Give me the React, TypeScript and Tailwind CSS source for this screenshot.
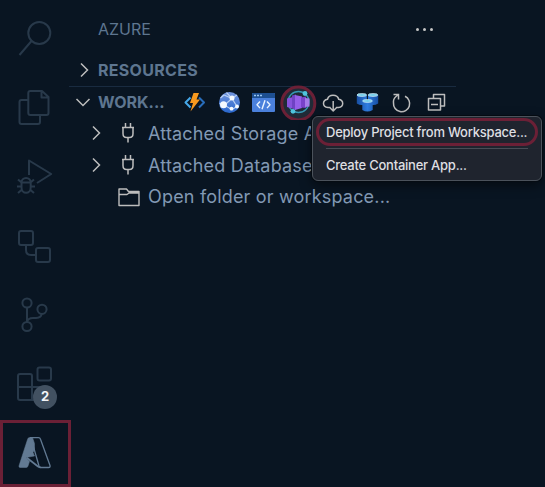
import React from 'react';

type GlyphProps = { box: string; className: string; children: React.ReactNode };

function Glyph({ box, className, children }: GlyphProps) {
  return (
    <svg viewBox={box} className={`block shrink-0 ${className}`} fill="none" stroke="currentColor" strokeLinejoin="round">
      {children}
    </svg>
  );
}

function ActivityBar() {
  const slot = 'w-[71px] h-[69px] text-[#28394a] stroke-2';
  return (
    <nav className="flex h-[487px] w-[71px] shrink-0 flex-col pt-1">
      <Glyph box="0 4 71 69" className={slot}>
        <circle cx="39.3" cy="33" r="11" />
        <path d="M31.5 41 19.5 55" />
      </Glyph>
      <Glyph box="0 73 71 69" className={slot}>
        <path d="M28 100h-6.5q-2 0-2 2v20q0 2 2 2H38q2 0 2-2v-6" />
        <path d="M30.300 91H42l6.500 6v16q0 2-2 2H30.300q-2 0-2-2V93q0-2 2-2zM41.500 91v6.500h7" />
      </Glyph>
      <Glyph box="0 142 71 69" className={slot}>
        <path d="M29 175V160.500L51.200 174 37 183" />
        <path d="M21.500 182.500v5a4.600 5.300 0 0 0 9.200 0v-5zM21.500 182.500a4.600 4.500 0 0 1 9.200 0M17 186.500h4M31 186.500h4M18 179.500l3.500 3M34 179.500l-3.500 3M18 193l3.500-3M34 193l-3.500-3" />
      </Glyph>
      <Glyph box="0 211 71 69" className={slot}>
        <rect x="19" y="231" width="14" height="14" rx="2" />
        <rect x="36" y="248" width="14" height="14" rx="2" />
        <path d="M26 245v5q0 5 5 5h5" />
      </Glyph>
      <Glyph box="0 280 71 69" className={slot}>
        <circle cx="27" cy="303" r="4.600" />
        <circle cx="42" cy="309.300" r="4.600" />
        <circle cx="27" cy="326.500" r="4.600" />
        <path d="M27 308v14q1-4 6-4h3q5.500-.500 5.500-4" />
      </Glyph>
      <div className="relative">
        <Glyph box="0 349 71 69" className={slot}>
          <rect x="37.500" y="367.500" width="13.500" height="13" rx="2" />
          <path d="M20 374h10q2 0 2 2v24H20q-2 0-2-2v-22q0-2 2-2zM18 387h27M32 400h13V387" />
        </Glyph>
        <span className="absolute left-[33px] top-[36px] flex h-6 w-6 items-center justify-center rounded-full bg-[#425161] font-[Inter,sans-serif] text-[13px] font-bold text-[#f3f5f7]">2</span>
      </div>
      <div className="mt-0.5 h-[67px] w-[71px] border-[3px] border-[#6b2036]">
        <Glyph box="3 423 65 61" className="h-[61px] w-[65px] text-[#627a93]">
          <path d="M29.500 437.500h3l2 6v6l-1.500 3 1.500 3.500-8.500 1.500 3.500 4-1.500 4.500q-.500 1.500-2 1.500h-6q-1.500 0-1-1.700l8.500-26.300q.500-2 2-2z" fill="currentColor" strokeWidth=".500" />
          <path d="M30 437.700h8.500q1.500 0 2 1.500l9.500 26.300q.500 2-1.500 2H41q-1.500 0-2-1.500L31.500 440q-.500-1.500-1.500-2.300" strokeWidth="1.300" />
          <path d="M26.500 457.500 38 466.500q1 1 3 1" strokeWidth="1.700" />
        </Glyph>
      </div>
    </nav>
  );
}

const Chevron = ({ down = false }: { down?: boolean }) => (
  <Glyph box="0 0 16 16" className="h-4 w-4 text-[#bdbdbd] stroke-[1.5]">
    <path d={down ? 'M1.500 5 8 11.500 14.500 5' : 'M5 1.500 11.500 8 5 14.500'} strokeLinejoin="miter" />
  </Glyph>
);

function Toolbar() {
  return (
    <Glyph box="180 84 270 36" className="h-9 w-[270px] text-[#bdbdbd]">
      <defs>
        <linearGradient id="web" x1="0" y1="0" x2="0" y2="1"><stop stopColor="#7295de" /><stop offset="1" stopColor="#2866cc" /></linearGradient>
        <linearGradient id="server" x1="0" x2="1"><stop stopColor="#174ea2" /><stop offset=".5" stopColor="#2f7de0" /><stop offset="1" stopColor="#174ea2" /></linearGradient>
      </defs>
      <g strokeWidth="2">
        <path d="m190.500 97.500-5 5 5 5" stroke="#45a7e8" />
        <path d="m199 97.500 5 5-5 5" stroke="#286dbb" />
        <path d="M193.500 93h5.500l-2.500 6.500h3.500l-9.500 12 2.500-8.500h-3z" fill="#f7991f" stroke="none" />
      </g>
      <g>
        <circle cx="229.500" cy="102.500" r="10.500" fill="url(#web)" stroke="none" />
        <path d="M220.500 98 224 95l8 3.500-8 7-4.500-2M232 98.500l5 8M224 105l8 4.500 5-3M226.500 92.500l5.500 6 5-3.500" stroke="#b9d0f3" strokeWidth="1.200" />
        <g fill="#f5faff" stroke="none"><circle cx="232" cy="98" r="2.500" /><circle cx="223.500" cy="104.800" r="3.500" /><circle cx="237" cy="106.500" r="1.900" /><circle cx="231.500" cy="108.700" r="1.900" /></g>
      </g>
      <g>
        <rect x="252" y="93" width="23" height="19" rx="1" fill="#4a80dc" stroke="none" />
        <path d="M252 98v-4q0-1 1-1h21q1 0 1 1v4z" fill="#1d4f91" stroke="none" />
        <path d="M254 95.500h2m1 0h2m1 0h2" stroke="#9ac7f3" strokeWidth="1.500" />
        <path d="m260 101.500-3 3.300 3 3.300m7-6.600 3 3.300-3 3.300m-2-7.800-3 9" stroke="#e8f2ff" strokeWidth="1.400" />
      </g>
      <g>
        <circle cx="298.300" cy="103.500" r="16.500" fill="#202b37" stroke="#6b2036" strokeWidth="3" />
        <circle cx="298.500" cy="102" r="10.500" stroke="#3598b3" strokeWidth="1.300" />
        <path d="m287 98.500 5-1.200v11.200l-5-1.500z" fill="#8753dc" stroke="none" />
        <path d="m292 95.500 4-1v15.500l-4-1.500z" fill="#6f42c4" stroke="none" />
        <path d="m295 95 7 1.500v11.500l-7 2z" fill="#965fe9" stroke="none" />
        <path d="m301 97.500 5-1v11.500l-5-.500z" fill="#7842ca" stroke="none" />
        <path d="m305 98 4.500.500v8l-4.500.500z" fill="#a57be9" stroke="none" />
        <circle cx="305" cy="93.500" r="2.400" fill="#50c4dc" stroke="none" />
        <circle cx="293" cy="111.300" r="2.400" fill="#50c4dc" stroke="none" />
      </g>
      <path d="M330.500 107.500H328q-4.500-.500-4.500-4 0-3.500 4-4.200 1-4 5.500-4 4.700 0 5.700 4 4 .700 4 4.200t-4.200 4H336M333.200 101v10M330 107.800l3.200 3.200 3.200-3.200" strokeWidth="1.500" />
      <g stroke="none">
        <path d="M356.800 95v8.500q5 3 10 0V95zM368 95v8.500q5 3 10.200 0V95zM362.300 101v9q5 3 10.400 0v-9z" fill="url(#server)" />
        <g fill="#70cce9" stroke="#dceffb" strokeWidth=".700"><ellipse cx="361.800" cy="95" rx="4.800" ry="1.400" /><ellipse cx="373" cy="95" rx="4.800" ry="1.400" /><ellipse cx="367.500" cy="101" rx="4.900" ry="1.400" /></g>
      </g>
      <path d="M393.500 94.500h5v5M398.500 94.500l-2.500 2q-3 2.500-2.500 6.500a8.100 8.100 0 1 0 11.500-6.700" strokeWidth="1.500" strokeLinejoin="miter" />
      <path d="M433.500 98.500v-4h11v11.500h-4M428.500 98.500h12v11.500h-12zM431 104.500h7" strokeWidth="1.500" />
    </Glyph>
  );
}

function PlugRow({ label }: { label: string }) {
  return (
    <div className="flex h-8 items-center pl-[19px] text-[#8299b4]">
      <Chevron />
      <Glyph box="0 0 20 24" className="ml-[14px] mr-[10px] h-6 w-5 text-[#bdbdbd] stroke-[1.500]">
        <path d="M7.500 2v4.500M12.500 2v4.500M4 6.500h12M5 6.500v6q0 4 3.500 4h3q3.500 0 3.500-4v-6M10 16.500v5" />
      </Glyph>
      <span className="whitespace-pre text-[18px] tracking-[0.180px]">{label}</span>
    </div>
  );
}

function Explorer() {
  return (
    <main className="-ml-px flex w-[386px] shrink-0 flex-col text-[#5e7690]">
      <header className="flex h-[54px] items-center pb-px pt-[5px]">
        <h1 className="ml-7 text-[16px]">AZURE</h1>
        <span className="ml-auto mr-[23px] flex gap-1">
          <i className="h-[3px] w-[3px] rounded-full bg-[#c5c5c5]" />
          <i className="h-[3px] w-[3px] rounded-full bg-[#c5c5c5]" />
          <i className="h-[3px] w-[3px] rounded-full bg-[#c5c5c5]" />
        </span>
      </header>
      <section className="flex h-8 items-center gap-[6px] pl-[6px]">
        <Chevron />
        <h2 className="text-[16px] font-bold tracking-[0.300px]">RESOURCES</h2>
      </section>
      <section className="-ml-px flex h-[31px] items-center border-t border-[#192b40] pl-[6px]">
        <Chevron down />
        <h2 className="ml-[7px] w-[82px] shrink-0 text-[16px] font-bold">WORK...</h2>
        <Toolbar />
      </section>
      <div className="-ml-px">
        <PlugRow label="Attached Storage A" />
        <PlugRow label="Attached Databases" />
        <div className="flex h-[31px] items-center pl-[49px] text-[#8299b4]">
          <Glyph box="0 0 22 20" className="mr-[8px] h-5 w-[22px] text-[#bdbdbd] stroke-[1.400]">
            <path d="M1 2h7.500l2 2.500H21v14H1zM1 7.500h8l2-1.500h10" />
          </Glyph>
          <span className="text-[18px] tracking-[0.180px]">Open folder or workspace...</span>
        </div>
      </div>
    </main>
  );
}

export default function App() {
  return (
    <div className="relative flex h-[487px] w-[545px] overflow-hidden bg-[#091522] font-[Inter,sans-serif]">
      <ActivityBar />
      <Explorer />
      <div role="menu" className="absolute left-[312px] top-[116px] h-[65px] w-[230px] rounded-[6px] border border-[#4b525b] bg-[#1f242e] px-[3px] pt-px text-[13px] font-medium tracking-[-0.240px] text-[#dedfe2] shadow-[0_0_0_1px_#050b12,0_4px_12px_#0008]">
        <div role="menuitem" className="flex h-7 w-[222px] items-center whitespace-nowrap rounded-full border-[3px] border-[#6b2036] pl-[7px] pt-px">Deploy Project from Workspace...</div>
        <div className="mx-[10px] mt-[2px] h-px bg-[#474c55]" />
        <div role="menuitem" className="flex h-[33px] items-center pl-[10px]">Create Container App...</div>
      </div>
    </div>
  );
}
